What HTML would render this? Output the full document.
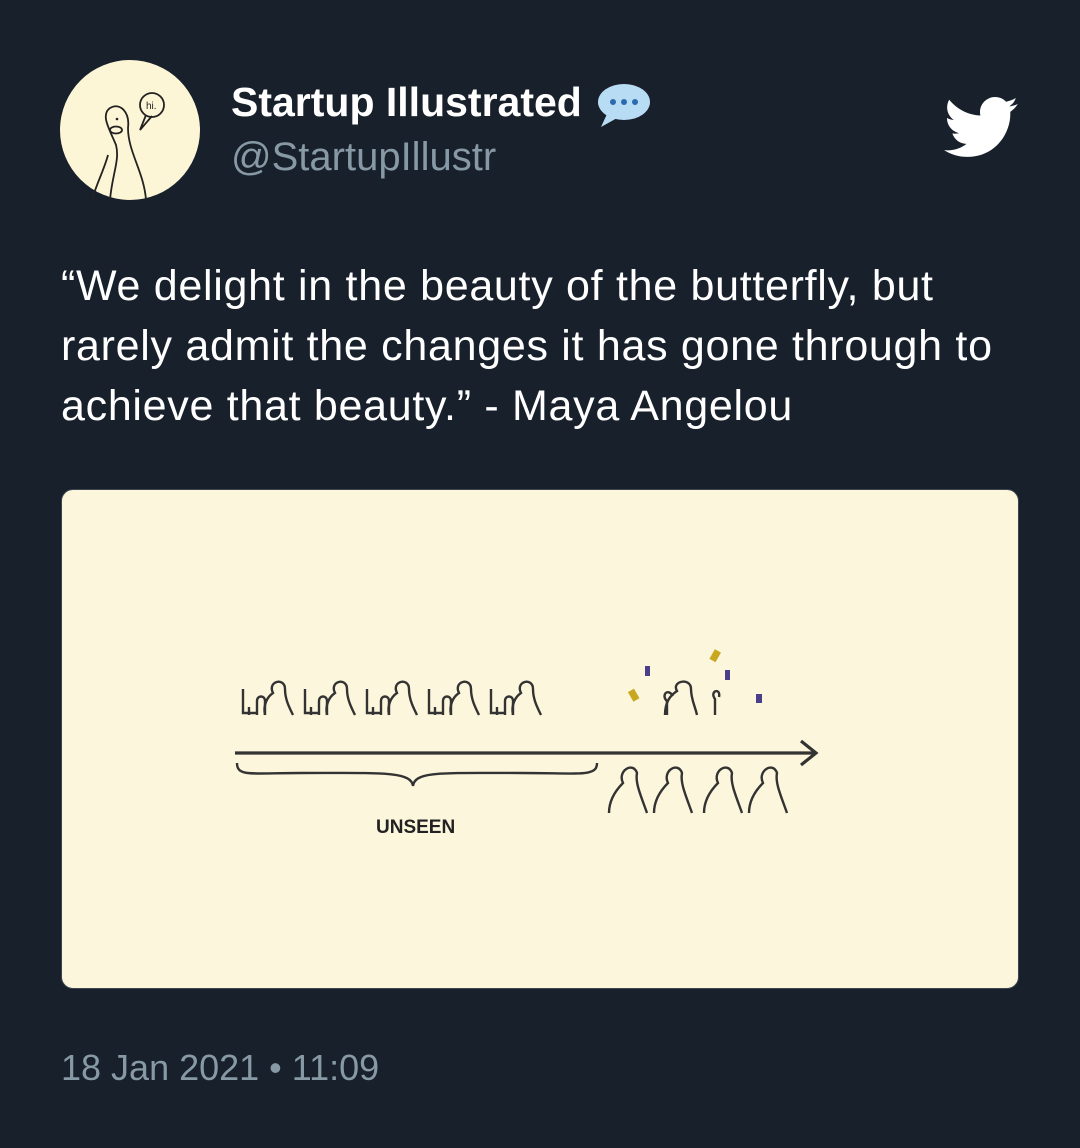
<!DOCTYPE html>
<html><head><meta charset="utf-8"><style>
body{margin:0;width:1080px;height:1148px;background:#17202b;font-family:"Liberation Sans",sans-serif;position:relative;overflow:hidden}
.abs{position:absolute;white-space:nowrap}
</style></head><body>
<svg class="abs" style="left:60px;top:60px" width="140" height="140" viewBox="0 0 140 140">
<circle cx="70" cy="70" r="70" fill="#fcf6d6"/>
<g fill="none" stroke="#222" stroke-width="1.8">
<path d="M50 140 C52 115 60 100 56 85 C50 70 40 55 50 48 C60 42 70 52 68 68 C68 92 84 112 86 140"/>
<path d="M32 140 C36 125 44 110 48 95"/>
<ellipse cx="56" cy="70" rx="6" ry="3.5"/>
<circle cx="92" cy="45" r="12"/><path d="M86 55 L80 70 L92 56"/>
</g>
<text x="86" y="49" font-size="10" font-family="Liberation Sans" fill="#222">hi.</text>
<circle cx="57" cy="59" r="1.3" fill="#222"/>
</svg>
<div class="abs" style="left:231px;top:79px;color:#fff;font-weight:bold;font-size:41px">Startup Illustrated</div>
<svg class="abs" style="left:597px;top:82px" width="54" height="46" viewBox="0 0 54 46">
<ellipse cx="27" cy="20" rx="26" ry="18" fill="#b9dcf5"/>
<path d="M10 32 L4 45 L22 35Z" fill="#b9dcf5"/>
<circle cx="16" cy="20" r="3" fill="#2a6bb0"/><circle cx="27" cy="20" r="3" fill="#2a6bb0"/><circle cx="38" cy="20" r="3" fill="#2a6bb0"/>
</svg>
<div class="abs" style="left:231px;top:135px;color:#8899a6;font-size:40px">@StartupIllustr</div>
<svg class="abs" style="left:941px;top:88px" width="78" height="78" viewBox="0 0 24 24"><path fill="#fff" d="M23.643 4.937c-.835.37-1.732.62-2.675.733.962-.576 1.7-1.49 2.048-2.578-.9.534-1.897.922-2.958 1.130-.85-.904-2.060-1.470-3.400-1.470-2.572 0-4.658 2.086-4.658 4.660 0 .364.042.718.120 1.060-3.873-.195-7.304-2.050-9.602-4.868-.4.690-.63 1.490-.63 2.342 0 1.616.823 3.043 2.072 3.878-.764-.025-1.482-.234-2.110-.583v.060c0 2.257 1.605 4.140 3.737 4.568-.392.106-.803.162-1.227.162-.3 0-.593-.028-.877-.082.593 1.850 2.313 3.198 4.352 3.234-1.595 1.250-3.604 1.995-5.786 1.995-.376 0-.747-.022-1.112-.065 2.062 1.323 4.510 2.093 7.140 2.093 8.570 0 13.255-7.098 13.255-13.254 0-.2-.005-.402-.014-.602.910-.658 1.700-1.477 2.323-2.410z"/></svg>
<div class="abs" style="left:61px;top:256px;color:#fff;font-size:43px;letter-spacing:0.7px;line-height:60px">“We delight in the beauty of the butterfly, but<br>rarely admit the changes it has gone through to<br>achieve that beauty.” - Maya Angelou</div>
<div class="abs" style="left:61px;top:489px;width:956px;height:498px;border:1px solid #3d4650;border-radius:12px;background:#fcf7dc;overflow:hidden">
<svg width="956" height="498" viewBox="0 0 956 498" style="position:absolute;left:0;top:0">
<g fill="none" stroke="#333" stroke-width="2.4" transform="translate(-61,-489)">
<path d="M234 752 H815 M800 740 L815 752 L800 764" stroke-width="3.2"/>
<path d="M236 762 C236 776 250 772 300 772 C380 772 410 770 412 785 C414 770 440 772 520 772 C580 772 596 776 596 762"/>
<g id="w">
<path d="M242 688 V712 H256 M248 706 V714"/>
<path d="M264 714 C262 704 266 696 272 692 C266 680 284 676 284 688 C284 698 288 706 292 714"/>
<path d="M256 714 V700 C256 694 264 694 264 700 V714"/>
</g>
<use href="#w" x="62"/><use href="#w" x="124"/><use href="#w" x="186"/><use href="#w" x="248"/>
<g id="p"><path d="M608 812 C608 800 614 790 622 782 C616 770 632 760 636 772 C634 782 640 795 646 812"/></g>
<use href="#p" x="45"/><use href="#p" x="95"/><use href="#p" x="140"/>
<path d="M664 714 C664 700 670 694 676 690 C670 680 690 676 690 688 C690 698 694 705 696 714"/>
<path d="M666 714 V700 C660 695 666 686 672 695 M714 714 V698 C708 690 720 686 718 696"/>
</g>
<rect x="568" y="200" width="7" height="11" fill="#c9a820" transform="rotate(-30 571 205)"/>
<rect x="650" y="160" width="7" height="11" fill="#c9a820" transform="rotate(30 653 165)"/>
<rect x="583" y="176" width="5" height="10" fill="#4b3f8c"/>
<rect x="663" y="180" width="5" height="10" fill="#4b3f8c"/>
<rect x="694" y="204" width="6" height="9" fill="#4b3f8c"/>
<text x="314" y="343" font-size="19" font-weight="bold" font-family="Liberation Sans" fill="#222">UNSEEN</text>
</svg>
</div>
<div class="abs" style="left:61px;top:1047px;color:#8899a6;font-size:36px">18 Jan 2021 • 11:09</div>
</body></html>
